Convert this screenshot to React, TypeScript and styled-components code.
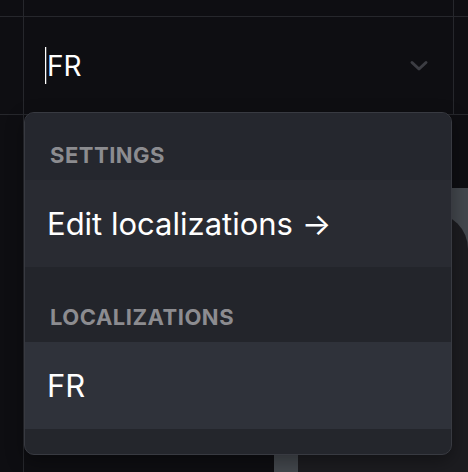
import React from "react";
import styled, { createGlobalStyle } from "styled-components";

const GlobalStyle = createGlobalStyle`
  html, body {
    margin: 0;
    padding: 0;
    background: #0e0e12;
  }
  body {
    font-family: Inter, "Noto Sans", "Liberation Sans", sans-serif;
    -webkit-font-smoothing: antialiased;
  }
`;

const Page = styled.div`
  position: relative;
  width: 468px;
  height: 472px;
  overflow: hidden;
  background: #0e0e12;
`;

const Grid = styled.div`
  display: grid;
  grid-template-columns: 24px 430px 1fr;
  grid-template-rows: 17px 98px 1fr;
  height: 100%;
`;

const Cell = styled.div<{ $right?: boolean; $bottom?: boolean; $span?: string }>`
  box-sizing: border-box;
  min-width: 0;
  ${(p) => (p.$right ? "border-right: 1px solid #26272c;" : "")}
  ${(p) => (p.$bottom ? "border-bottom: 1px solid #26272c;" : "")}
  ${(p) => (p.$span ? `grid-column: ${p.$span};` : "")}
`;

const InputCell = styled(Cell)`
  display: flex;
  align-items: center;
  padding-left: 21px;
  padding-right: 22px;
`;

const Caret = styled.span`
  width: 1px;
  height: 37px;
  background: #ffffff;
  box-shadow: 0.5px 0 0 rgba(255, 255, 255, 0.5);
  flex: none;
`;

const Value = styled.span`
  color: #ffffff;
  font-size: 28px;
  line-height: 1;
  margin-left: 1px;
  flex: 1;
`;

const Chevron = styled.svg`
  width: 22px;
  height: 22px;
  flex: none;
`;

const Preview = styled.div`
  grid-column: 2 / 4;
  display: flex;
  flex-direction: column;
  padding: 73px 0 0 250px;
`;

const PreviewFrame = styled.div`
  flex: 1;
  background: #43474d;
  padding: 25px 0 0 24px;
  display: flex;
`;

const PreviewCard = styled.div`
  flex: 1;
  background: #1c1c20;
  border-top-right-radius: 36px;
`;

const Menu = styled.div`
  position: absolute;
  left: 24px;
  top: 112px;
  width: 428px;
  height: 343px;
  box-sizing: border-box;
  border: 1px solid #383a41;
  border-radius: 10px;
  background: #24262c;
  overflow: hidden;
  display: flex;
  flex-direction: column;
  box-shadow: 0 6px 18px rgba(0, 0, 0, 0.35);
`;

const GroupLabel = styled.div<{ $top: number; $h: number; $bg: string }>`
  box-sizing: border-box;
  height: ${(p) => p.$h}px;
  padding: ${(p) => p.$top}px 0 0 25px;
  background: ${(p) => p.$bg};
  color: #8c8c90;
  font-size: 22px;
  font-weight: 700;
  letter-spacing: 0.5px;
  line-height: 22px;
  text-transform: uppercase;
`;

const Item = styled.div<{ $bg: string }>`
  box-sizing: border-box;
  height: 87px;
  display: flex;
  align-items: center;
  padding-left: 22px;
  background: ${(p) => p.$bg};
  color: #ffffff;
  font-size: 31px;
  line-height: 1;
  white-space: nowrap;
`;

export default function App() {
  return (
    <>
      <GlobalStyle />
      <Page>
        <Grid>
          <Cell $right $bottom />
          <Cell $right $bottom />
          <Cell $bottom />
          <Cell $right $bottom />
          <InputCell $right $bottom>
            <Caret />
            <Value>FR</Value>
            <Chevron viewBox="0 0 22 22" fill="none">
              <path
                d="M3 7.5 L10 14 L17 7.5"
                stroke="#3c3d43"
                strokeWidth="3"
                strokeLinecap="round"
                strokeLinejoin="round"
              />
            </Chevron>
          </InputCell>
          <Cell $bottom />
          <Cell $right />
          <Preview>
            <PreviewFrame>
              <PreviewCard />
            </PreviewFrame>
          </Preview>
        </Grid>
        <Menu>
          <GroupLabel $top={31} $h={67} $bg="#25272e">Settings</GroupLabel>
          <Item $bg="#292b32">Edit localizations →</Item>
          <GroupLabel $top={39} $h={75} $bg="#23252b">Localizations</GroupLabel>
          <Item $bg="#2f323a">FR</Item>
        </Menu>
      </Page>
    </>
  );
}
